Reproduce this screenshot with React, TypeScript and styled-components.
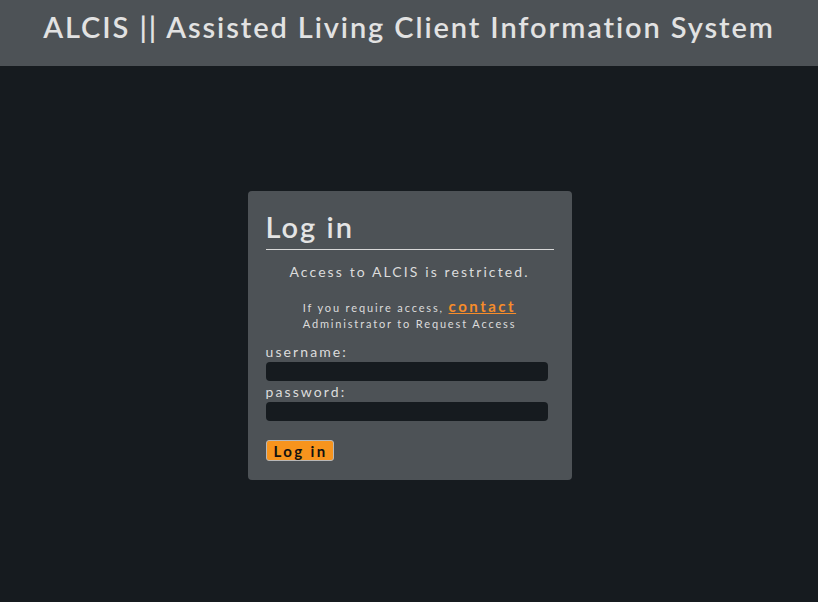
import React from "react";
import styled, { createGlobalStyle } from "styled-components";

const Global = createGlobalStyle`
  html, body { margin: 0; padding: 0; background: #161b1f; }
  body { font-family: "Lato", "Open Sans", sans-serif; color: #dcdcdc; }
  * { box-sizing: border-box; }
`;

const Page = styled.div`
  min-height: 602px;
  background: #161b1f;
  display: flex;
  flex-direction: column;
`;

const Header = styled.header`
  height: 66px;
  background: #4d5256;
  display: flex;
  align-items: center;
  justify-content: center;
`;

const Title = styled.h1`
  margin: 0;
  font-family: "Lato", sans-serif;
  font-weight: 600;
  font-size: 29px;
  letter-spacing: 1.9px;
  color: #e2e2e2;
  padding-bottom: 14px;
`;

const Main = styled.main`
  display: flex;
  justify-content: center;
  padding-top: 125px;
  padding-left: 1px;
`;

const Card = styled.section`
  width: 324px;
  height: 289px;
  background: #4d5256;
  border-radius: 4px;
  padding: 18px 18px 0 18px;
`;

const Heading = styled.h2`
  margin: 0;
  font-family: "Lato", sans-serif;
  font-weight: 600;
  font-size: 29px;
  letter-spacing: 2px;
  color: #e4e4e4;
  line-height: 36px;
  padding-bottom: 4px;
  border-bottom: 1px solid #d8d8d8;
`;

const Notice = styled.p`
  margin: 13px 0 0 0;
  text-align: center;
  font-size: 14px;
  letter-spacing: 2.1px;
  color: #dcdcdc;
  line-height: 18px;
`;

const Small = styled.p`
  margin: 17px 0 0 0;
  text-align: center;
  font-size: 11px;
  letter-spacing: 1.85px;
  line-height: 16px;
  color: #dcdcdc;
`;

const Contact = styled.a`
  color: #f68c2a;
  font-size: 15px;
  font-weight: 700;
  letter-spacing: 2.5px;
  text-decoration: underline;
`;

const Form = styled.form`
  margin-top: 12px;
  display: flex;
  flex-direction: column;
  width: 282px;
`;

const Label = styled.label`
  font-size: 14px;
  letter-spacing: 2.1px;
  color: #dcdcdc;
  line-height: 16px;
`;

const Input = styled.input`
  height: 19px;
  width: 282px;
  border: none;
  border-radius: 4px;
  background: #161b1f;
  margin: 2px 0 3px 0;
  outline: none;
  color: #ddd;
`;

const Button = styled.button`
  margin-top: 16px;
  align-self: flex-start;
  width: 68px;
  height: 21px;
  background: #f7941d;
  border: 1px solid #b8b8b8;
  border-radius: 3px;
  font-family: "Lato", sans-serif;
  font-weight: 700;
  font-size: 15px;
  letter-spacing: 2.4px;
  color: #111;
  padding: 0 0 0 2px;
  line-height: 18px;
`;

export default function App() {
  return (
    <Page>
      <Global />
      <Header>
        <Title>ALCIS || Assisted Living Client Information System</Title>
      </Header>
      <Main>
        <Card>
          <Heading>Log in</Heading>
          <Notice>Access to ALCIS is restricted.</Notice>
          <Small>
            If you require access, <Contact href="#">contact</Contact>
            <br />
            Administrator to Request Access
          </Small>
          <Form onSubmit={(e) => e.preventDefault()}>
            <Label>username:</Label>
            <Input type="text" />
            <Label>password:</Label>
            <Input type="password" />
            <Button type="submit">Log in</Button>
          </Form>
        </Card>
      </Main>
    </Page>
  );
}
